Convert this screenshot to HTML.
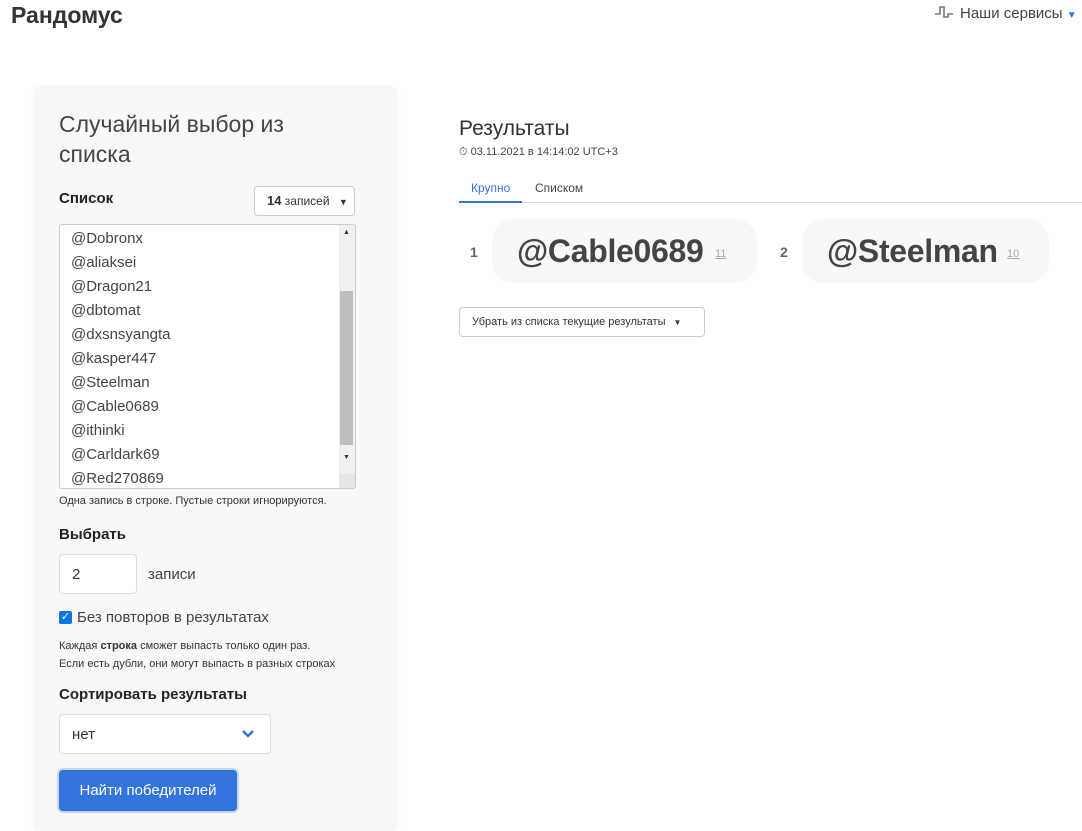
<!DOCTYPE html>
<html><head><meta charset="utf-8"><style>
*{box-sizing:border-box;margin:0;padding:0}
body{width:1082px;height:831px;overflow:hidden;background:#fff;font-family:"Liberation Sans","DejaVu Sans",sans-serif;color:#333;position:relative}
.abs{position:absolute}
.logo{left:11px;top:2px;font-size:23px;font-weight:bold;color:#333}
.svc{left:934px;top:4px;font-size:15px;color:#444}
.card{left:35px;top:88px;width:361px;height:743px;background:#f8f8f8;border-radius:6px;box-shadow:0 0 6px rgba(0,0,0,.08)}
h1{font-weight:normal;font-size:23px;line-height:30px;color:#444}
.lbl{font-weight:bold;font-size:15px;color:#222}
.ta{left:59px;top:224px;width:297px;height:265px;background:#fff;border:1px solid #ccc;border-radius:3px;overflow:hidden}
.ta .l{position:absolute;left:11px;font-size:15px;color:#444}
.sb{position:absolute;right:0;top:0;width:16px;height:100%;background:#f0f0f0}
.th{position:absolute;left:1px;top:66px;width:13px;height:154px;background:#bdbdbd}
.small{font-size:11px;color:#333}
.inp{background:#fff;border:1px solid #ddd;border-radius:4px}
.btn{left:59px;top:770px;width:178px;height:41px;background:#3273dc;border-radius:4px;color:#fff;font-size:15px;text-align:center;line-height:41px;box-shadow:0 0 0 2px #c5d6f3}
.pill{background:#f8f8f8;border-radius:22px;height:64px}
.big{font-size:32px;font-weight:bold;color:#444;letter-spacing:-0.3px}
.num{font-size:14px;font-weight:bold;color:#666}
.sup{font-size:11px;color:#aaa;text-decoration:underline}
</style></head><body>
<div class="abs logo">Рандомус</div>
<div class="abs svc"><svg width="22" height="16" viewBox="0 0 22 16" style="vertical-align:-2px;margin-right:4px"><path d="M1 10H6V3H10V13H14V10H19" fill="none" stroke="#777" stroke-width="1.6"/></svg>Наши сервисы <span style="color:#3273dc;font-size:10px">&#9660;</span></div>

<div class="abs card"></div>
<h1 class="abs" style="left:59px;top:109px">Случайный выбор из<br>списка</h1>
<div class="abs lbl" style="left:59px;top:190px">Список</div>
<div class="abs inp" style="left:254px;top:186px;width:101px;height:30px;border-color:#ccc;font-size:12px;line-height:28px;padding-left:12px;color:#333"><b style="font-size:13px">14</b> записей <span style="font-size:9px;margin-left:6px">&#9660;</span></div>
<div class="abs ta">
<div class="l" style="top:5px">@Dobronx</div>
<div class="l" style="top:29px">@aliaksei</div>
<div class="l" style="top:53px">@Dragon21</div>
<div class="l" style="top:77px">@dbtomat</div>
<div class="l" style="top:101px">@dxsnsyangta</div>
<div class="l" style="top:125px">@kasper447</div>
<div class="l" style="top:149px">@Steelman</div>
<div class="l" style="top:173px">@Cable0689</div>
<div class="l" style="top:197px">@ithinki</div>
<div class="l" style="top:221px">@Carldark69</div>
<div class="l" style="top:245px">@Red270869</div>
<div class="sb"><div class="th"></div><div style="position:absolute;top:4px;left:4px;font-size:7px;color:#333">&#9650;</div><div style="position:absolute;top:229px;left:4px;font-size:7px;color:#333">&#9660;</div><div style="position:absolute;bottom:0;left:0;width:16px;height:14px;background:#e6e6e6"></div></div>
</div>
<div class="abs small" style="left:59px;top:495px">Одна запись в строке. Пустые строки игнорируются.</div>
<div class="abs lbl" style="left:59px;top:526px">Выбрать</div>
<div class="abs inp" style="left:59px;top:554px;width:78px;height:40px;font-size:15px;line-height:40px;padding-left:12px">2</div>
<div class="abs" style="left:148px;top:566px;font-size:15px;color:#444">записи</div>
<div class="abs" style="left:59px;top:611px;width:13px;height:13px;background:#0b75e0;border-radius:2px;color:#fff;font-size:11px;line-height:13px;text-align:center">✓</div>
<div class="abs" style="left:77px;top:609px;font-size:15px;color:#444">Без повторов в результатах</div>
<div class="abs small" style="left:59px;top:637px;line-height:18px">Каждая <b>строка</b> сможет выпасть только один раз.<br>Если есть дубли, они могут выпасть в разных строках</div>
<div class="abs lbl" style="left:59px;top:686px">Сортировать результаты</div>
<div class="abs inp" style="left:59px;top:714px;width:212px;height:40px;font-size:15px;line-height:40px;padding-left:12px">нет<svg class="abs" style="left:181px;top:14px" width="14" height="10" viewBox="0 0 14 10"><path d="M2 2L7 7L12 2" fill="none" stroke="#3273dc" stroke-width="2.5"/></svg></div>
<div class="abs btn">Найти победителей</div>

<div class="abs" style="left:459px;top:117px;font-size:21px;color:#333">Результаты</div>
<div class="abs" style="left:459px;top:146px;font-size:11px;color:#444">⏱ 03.11.2021 в 14:14:02 UTC+3</div>
<div class="abs" style="left:459px;top:202px;width:623px;height:1px;background:#ddd"></div>
<div class="abs" style="left:459px;top:201px;width:63px;height:2px;background:#3273dc"></div>
<div class="abs" style="left:471px;top:181px;font-size:12px;color:#3273dc">Крупно</div>
<div class="abs" style="left:535px;top:181px;font-size:12px;color:#444">Списком</div>
<div class="abs num" style="left:470px;top:244px">1</div>
<div class="abs pill" style="left:492px;top:219px;width:265px"></div>
<div class="abs big" style="left:517px;top:233px">@Cable0689</div>
<div class="abs sup" style="left:715px;top:248px">11</div>
<div class="abs num" style="left:780px;top:244px">2</div>
<div class="abs pill" style="left:802px;top:219px;width:247px"></div>
<div class="abs big" style="left:827px;top:233px">@Steelman</div>
<div class="abs sup" style="left:1007px;top:248px">10</div>
<div class="abs inp" style="left:459px;top:307px;width:246px;height:30px;border-color:#ccc;font-size:11px;line-height:28px;padding-left:12px;color:#333">Убрать из списка текущие результаты <span style="font-size:8px;margin-left:5px">&#9660;</span></div>
</body></html>
